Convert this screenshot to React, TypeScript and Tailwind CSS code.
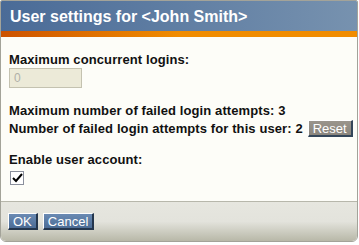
export default function App() {
  return (
    <div className="w-[359px] h-[245px] bg-white font-['Liberation_Sans',Arial,sans-serif]">
      <div className="w-[358px] h-[242px] border border-[#a3a399] rounded-t-[2px] rounded-b-[6px] overflow-hidden flex flex-col">
        <div className="h-[30px] bg-gradient-to-r from-[#4a6b97] to-[#7792af] pl-[9px] text-[16px] leading-[31px] font-bold text-white">
          User settings for &lt;John Smith&gt;
        </div>
        <div className="h-[6px] bg-gradient-to-r from-[#cc5200] via-[#f08c00] to-[#f08c00]" />
        <div className="h-[164px] bg-[#fdfdf8] pl-[8px] pt-[15px] text-[13px] font-bold tracking-[0.1px] text-[#111]">
          <div className="leading-[15px]">Maximum concurrent logins:</div>
          <div className="mt-[1px] w-[73px] h-[20px] bg-[#ecead8] border border-[#c4c2b0] text-[#b0b0a8] font-normal text-[12px] leading-[18px] pl-[4px]">
            0
          </div>
          <div className="mt-[15px] leading-[15px]">Maximum number of failed login attempts: 3</div>
          <div className="mt-[2px] h-[17px] flex items-start">
            <span className="leading-[17px]">Number of failed login attempts for this user: 2</span>
            <button className="ml-[5px] h-[17px] px-[4px] bg-gradient-to-b from-[#9a958d] to-[#8a857d] border-t border-l border-t-white border-l-white border-r-2 border-b-2 border-r-[#34465a] border-b-[#34465a] text-white font-normal text-[13px] leading-[13px] tracking-normal">
              Reset
            </button>
          </div>
          <div className="mt-[15px] leading-[15px]">Enable user account:</div>
          <div className="mt-[4px] ml-[1px] w-[14px] h-[14px] border border-[#8a8f9c] bg-white flex items-center justify-center">
            <svg width="11" height="10" viewBox="0 0 11 10">
              <path d="M1 5 L4 8 L10 1" fill="none" stroke="#000" strokeWidth="2" />
            </svg>
          </div>
        </div>
        <div className="flex-1 border-t border-[#b7b7ab] bg-gradient-to-b from-[#e6e6df] via-[#e3e3dc] to-[#b8b8a8] pl-[7px] pt-[11px] flex gap-[5px] items-start">
          <button className="h-[17px] px-[4px] bg-gradient-to-b from-[#6a8ab3] to-[#4c6c95] border-t border-l border-t-white border-l-white border-r-2 border-b-2 border-r-[#24364d] border-b-[#24364d] text-white text-[13px] leading-[13px]">
            OK
          </button>
          <button className="h-[17px] px-[4px] bg-gradient-to-b from-[#6a8ab3] to-[#4c6c95] border-t border-l border-t-white border-l-white border-r-2 border-b-2 border-r-[#24364d] border-b-[#24364d] text-white text-[13px] leading-[13px]">
            Cancel
          </button>
        </div>
      </div>
    </div>
  );
}
